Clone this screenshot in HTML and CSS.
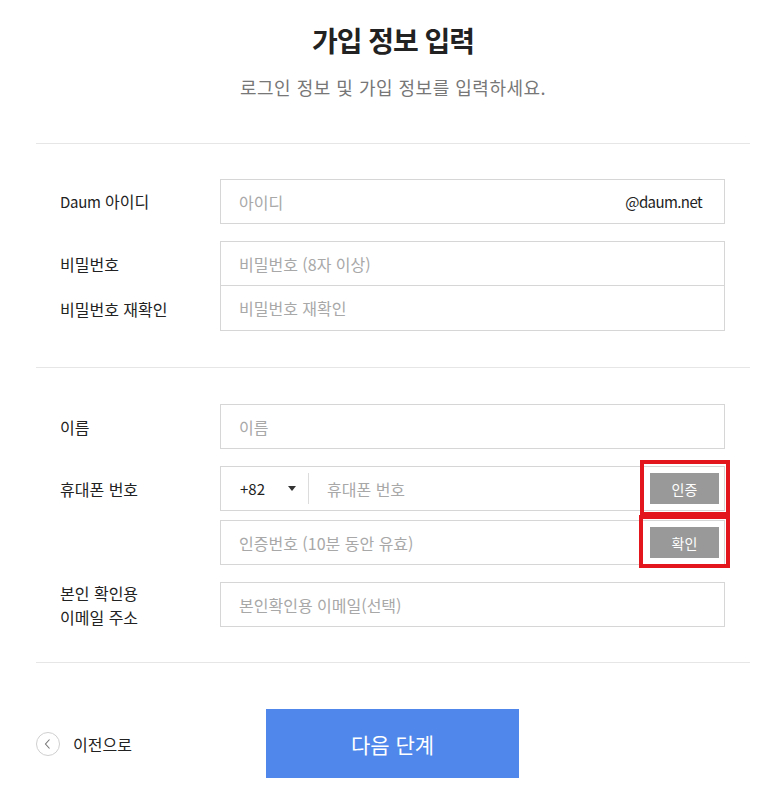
FILE: index.html
```html
<!DOCTYPE html>
<html lang="ko">
<head>
<meta charset="utf-8">
<title>가입 정보 입력</title>
<link rel="stylesheet" href="styles.css">
</head>
<body>
<div class="page">
  <header class="head">
    <h1 class="title">가입 정보 입력</h1>
    <p class="subtitle">로그인 정보 및 가입 정보를 입력하세요.</p>
  </header>

  <section class="section section-1">
    <div class="row">
      <div class="label"><span class="latin">Daum</span> 아이디</div>
      <div class="field">
        <input class="input" type="text" placeholder="아이디">
        <span class="suffix">@daum.net</span>
      </div>
    </div>
    <div class="pair">
      <div class="label">비밀번호</div>
      <div class="field field-top">
        <input class="input" type="password" placeholder="비밀번호 (8자 이상)">
      </div>
      <div class="label">비밀번호 재확인</div>
      <div class="field field-bottom">
        <input class="input" type="password" placeholder="비밀번호 재확인">
      </div>
    </div>
  </section>

  <section class="section section-2">
    <div class="row">
      <div class="label">이름</div>
      <div class="field">
        <input class="input" type="text" placeholder="이름">
      </div>
    </div>
    <div class="row">
      <div class="label">휴대폰 번호</div>
      <div class="field">
        <div class="country">
          <span class="code">+82</span>
          <span class="caret"></span>
        </div>
        <span class="vsep"></span>
        <input class="input input-phone" type="text" placeholder="휴대폰 번호">
        <button class="small-btn" type="button">인증</button>
        <span class="mark mark-1"></span>
      </div>
    </div>
    <div class="row row-tight">
      <div class="label"></div>
      <div class="field">
        <input class="input" type="text" placeholder="인증번호 (10분 동안 유효)">
        <button class="small-btn" type="button">확인</button>
        <span class="mark mark-2"></span>
      </div>
    </div>
    <div class="row">
      <div class="label">본인 확인용<br>이메일 주소</div>
      <div class="field">
        <input class="input" type="text" placeholder="본인확인용 이메일(선택)">
      </div>
    </div>
  </section>

  <footer class="foot">
    <a class="back" href="#">
      <span class="back-icon">
        <svg width="24" height="24" viewBox="0 0 24 24"><circle cx="12" cy="12" r="11.5" fill="#fff" stroke="#cfcfcf"/><polyline points="13.5,7.5 9.5,12 13.5,16.5" fill="none" stroke="#777" stroke-width="1.1"/></svg>
      </span>
      <span class="back-text">이전으로</span>
    </a>
    <button class="next" type="button">다음 단계</button>
  </footer>
</div>
</body>
</html>
```

FILE: styles.css
```css
* { box-sizing: border-box; }

body {
  margin: 0;
  background: #fff;
  font-family: "Noto Sans CJK KR", "Noto Sans", sans-serif;
  color: #333;
}

.page {
  width: 782px;
  padding: 0 32px 0 36px;
}

.head {
  text-align: center;
  padding-top: 20px;
  padding-bottom: 43px;
  border-bottom: 1px solid #e6e6e6;
}

.title {
  margin: 0;
  font-size: 28px;
  line-height: 40px;
  font-weight: 700;
  color: #222;
  letter-spacing: -1px;
}

.subtitle {
  margin: 14px 0 0;
  font-size: 18px;
  line-height: 26px;
  color: #777;
  letter-spacing: 0.5px;
}

.section {
  border-bottom: 1px solid #e6e6e6;
}

.section-1 { padding: 35px 0 36px; }
.section-2 { padding: 36px 0 35px; }

.row {
  display: grid;
  grid-template-columns: 184px 505px;
  grid-template-rows: 45px;
  align-items: center;
  margin-top: 17px;
}

.row:first-child { margin-top: 0; }
.row-tight { margin-top: 9px; }

.pair {
  display: grid;
  grid-template-columns: 184px 505px;
  grid-template-rows: 45px 45px;
  align-items: center;
  margin-top: 17px;
}

.label {
  padding-left: 24px;
  font-size: 16px;
  line-height: 24px;
  color: #222;
}

.latin {
  font-size: 15px;
  letter-spacing: -0.3px;
}

.field {
  position: relative;
  display: flex;
  align-items: center;
  height: 45px;
  border: 1px solid #d6d6d6;
  background: #fff;
}

.field-bottom {
  border-top: none;
}

.input {
  flex: 1;
  min-width: 0;
  height: 100%;
  border: none;
  outline: none;
  background: transparent;
  padding: 0 0 0 18px;
  font-family: inherit;
  font-size: 16px;
  color: #333;
}

.input::placeholder { color: #a8a8a8; }

.suffix {
  padding-right: 22px;
  font-size: 15px;
  color: #222;
  letter-spacing: -0.6px;
}

.country {
  display: flex;
  align-items: center;
  width: 87px;
  padding-left: 19px;
}

.code {
  font-size: 15px;
  color: #222;
  width: 48px;
}

.caret {
  width: 0;
  height: 0;
  border-left: 4px solid transparent;
  border-right: 4px solid transparent;
  border-top: 5px solid #333;
}

.vsep {
  width: 1px;
  height: 31px;
  background: #dcdcdc;
}

.small-btn {
  width: 69px;
  height: 31px;
  margin-right: 5px;
  border: none;
  background: #999;
  color: #fff;
  font-family: inherit;
  font-size: 14px;
  padding: 0;
}

.mark {
  position: absolute;
  border: 4px solid #e3161e;
  pointer-events: none;
}

.mark-1 {
  left: 419px;
  top: -7px;
  width: 90px;
  height: 56px;
}

.mark-2 {
  left: 418px;
  top: -6px;
  width: 91px;
  height: 53px;
}

.foot {
  display: grid;
  grid-template-columns: 230px 253px;
  align-items: center;
  padding-top: 46px;
}

.back {
  display: flex;
  align-items: center;
  gap: 13px;
  text-decoration: none;
  color: #222;
}

.back-icon {
  display: flex;
  width: 24px;
  height: 24px;
}

.back-text {
  font-size: 16px;
}

.next {
  height: 69px;
  border: none;
  background: #4f88ea;
  color: #fff;
  font-family: inherit;
  font-size: 21px;
  padding: 0;
}
```
